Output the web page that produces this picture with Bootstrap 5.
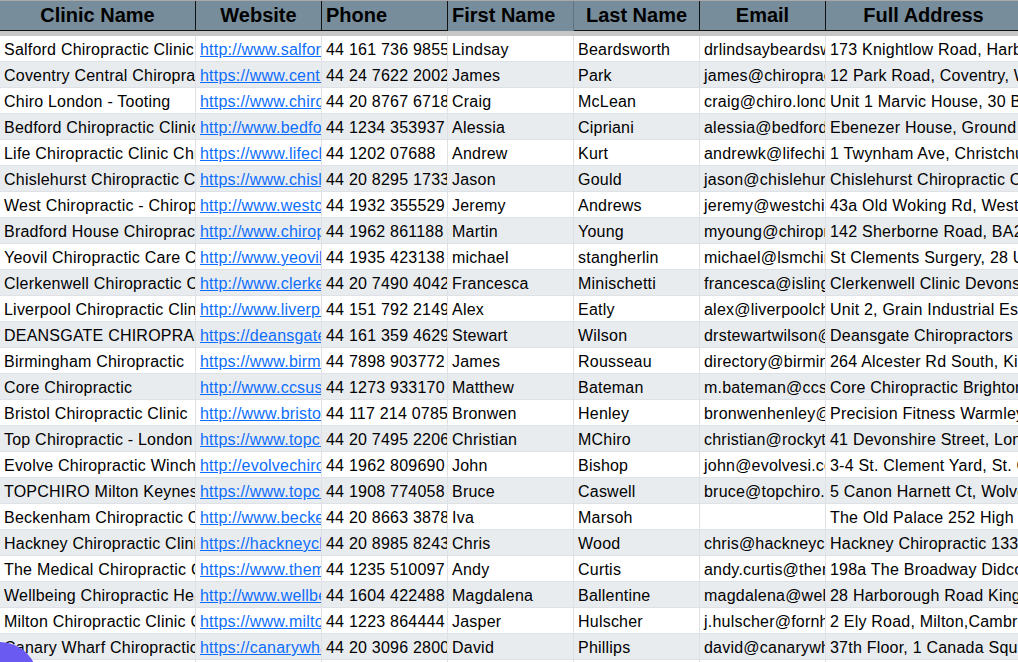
<!DOCTYPE html>
<html lang="en">
<head>
<meta charset="utf-8">
<title>Chiropractic clinics</title>
<link href="https://cdn.jsdelivr.net/npm/bootstrap@5.3.0/dist/css/bootstrap.min.css" rel="stylesheet">
<style>
html,body{height:662px;overflow:hidden;background:#fff}
body{font-family:"Liberation Sans",Arial,sans-serif;padding-top:1px;background:#fff}
.top-rule{position:absolute;top:0;left:0;width:100%;height:1px;background:#a9a9a9}
.sheet{table-layout:fixed;width:1022px;margin:0;border-collapse:separate;border-spacing:0;font-size:16px;letter-spacing:.22px;color:#000}
.sheet col.c1{width:196px}
.sheet col.cn{width:126px}
.sheet col.c7{width:196px}
.sheet thead th{background:#778d9b;color:#000;font-size:20px;letter-spacing:0;font-weight:700;height:30px;padding:0 4px;line-height:27px;text-align:center;vertical-align:middle;white-space:nowrap;overflow:hidden;border:0;border-right:1px solid #111;border-bottom:1px solid #111;border-left:0}
.sheet thead th.left-h{text-align:left}
.sheet thead th.soft{border-right-color:#5f7381;border-bottom-color:#778d9b}
.sheet thead tr.band td{height:5px;padding:0;background:#c6c6c6;border:0}
.sheet tbody td{height:26px;padding:3px 0 0 4px;line-height:22px;vertical-align:middle;white-space:nowrap;overflow:hidden;border:0;border-right:1px solid #dee2e6;border-bottom:1px solid #dee2e6;background:#fff;color:#000;box-shadow:none}
.sheet tbody tr:nth-child(even) td{background:#e9ecef}
.sheet tbody a{color:#0d6efd}
.launcher{position:fixed;left:-38px;bottom:-56px;width:76px;height:76px;border-radius:50%;background:#6a5af2}
</style>
</head>
<body>
<div class="top-rule"></div>
<table class="table sheet">
<colgroup><col class="c1"><col class="cn"><col class="cn"><col class="cn"><col class="cn"><col class="cn"><col class="c7"></colgroup>
<thead>
<tr><th>Clinic Name</th><th>Website</th><th class="left-h">Phone</th><th class="left-h soft">First Name</th><th>Last Name</th><th>Email</th><th>Full Address</th></tr>
<tr class="band"><td colspan="7"></td></tr>
</thead>
<tbody>
<tr><td>Salford Chiropractic Clinic</td><td><a href="#">http://www.salford.co.uk</a></td><td>44 161 736 9855</td><td>Lindsay</td><td>Beardsworth</td><td>drlindsaybeardsworth</td><td>173 Knightlow Road, Harborne</td></tr>
<tr><td>Coventry Central Chiropractic</td><td><a href="#">https://www.central.co.uk</a></td><td>44 24 7622 2002</td><td>James</td><td>Park</td><td>james@chiropractic</td><td>12 Park Road, Coventry, West Midlands</td></tr>
<tr><td>Chiro London - Tooting</td><td><a href="#">https://www.chiro.london</a></td><td>44 20 8767 6718</td><td>Craig</td><td>McLean</td><td>craig@chiro.london</td><td>Unit 1 Marvic House, 30 Bellevue</td></tr>
<tr><td>Bedford Chiropractic Clinic</td><td><a href="#">http://www.bedford.co.uk</a></td><td>44 1234 353937</td><td>Alessia</td><td>Cipriani</td><td>alessia@bedford.co</td><td>Ebenezer House, Ground Floor</td></tr>
<tr><td>Life Chiropractic Clinic Christchurch</td><td><a href="#">https://www.lifechiro.co</a></td><td>44 1202 07688</td><td>Andrew</td><td>Kurt</td><td>andrewk@lifechiro</td><td>1 Twynham Ave, Christchurch</td></tr>
<tr><td>Chislehurst Chiropractic Clinic</td><td><a href="#">https://www.chislehurst</a></td><td>44 20 8295 1733</td><td>Jason</td><td>Gould</td><td>jason@chislehurst.co</td><td>Chislehurst Chiropractic Clinic</td></tr>
<tr><td>West Chiropractic - Chiropractor</td><td><a href="#">http://www.westchiro.co</a></td><td>44 1932 355529</td><td>Jeremy</td><td>Andrews</td><td>jeremy@westchiro</td><td>43a Old Woking Rd, West Byfleet</td></tr>
<tr><td>Bradford House Chiropractic</td><td><a href="#">http://www.chiropractic</a></td><td>44 1962 861188</td><td>Martin</td><td>Young</td><td>myoung@chiropractic</td><td>142 Sherborne Road, BA21 4HQ</td></tr>
<tr><td>Yeovil Chiropractic Care Clinic</td><td><a href="#">http://www.yeovilchiro</a></td><td>44 1935 423138</td><td>michael</td><td>stangherlin</td><td>michael@lsmchiro</td><td>St Clements Surgery, 28 Union</td></tr>
<tr><td>Clerkenwell Chiropractic Clinic</td><td><a href="#">http://www.clerkenwell</a></td><td>44 20 7490 4042</td><td>Francesca</td><td>Minischetti</td><td>francesca@islington</td><td>Clerkenwell Clinic Devonshire</td></tr>
<tr><td>Liverpool Chiropractic Clinic</td><td><a href="#">http://www.liverpoolchiro</a></td><td>44 151 792 2149</td><td>Alex</td><td>Eatly</td><td>alex@liverpoolchiro</td><td>Unit 2, Grain Industrial Estate</td></tr>
<tr><td>DEANSGATE CHIROPRACTIC</td><td><a href="#">https://deansgatechiro</a></td><td>44 161 359 4629</td><td>Stewart</td><td>Wilson</td><td>drstewartwilson@deansgate</td><td>Deansgate Chiropractors Ltd</td></tr>
<tr><td>Birmingham Chiropractic</td><td><a href="#">https://www.birminghamchiro</a></td><td>44 7898 903772</td><td>James</td><td>Rousseau</td><td>directory@birmingham</td><td>264 Alcester Rd South, Kings Heath</td></tr>
<tr><td>Core Chiropractic</td><td><a href="#">http://www.ccsussex.co</a></td><td>44 1273 933170</td><td>Matthew</td><td>Bateman</td><td>m.bateman@ccsussex</td><td>Core Chiropractic Brighton</td></tr>
<tr><td>Bristol Chiropractic Clinic</td><td><a href="#">http://www.bristolchiro</a></td><td>44 117 214 0785</td><td>Bronwen</td><td>Henley</td><td>bronwenhenley@gmail</td><td>Precision Fitness Warmley</td></tr>
<tr><td>Top Chiropractic - London</td><td><a href="#">https://www.topchiro</a></td><td>44 20 7495 2206</td><td>Christian</td><td>MChiro</td><td>christian@rockyt.com</td><td>41 Devonshire Street, London</td></tr>
<tr><td>Evolve Chiropractic Winchester</td><td><a href="#">http://evolvechiro.co</a></td><td>44 1962 809690</td><td>John</td><td>Bishop</td><td>john@evolvesi.co.uk</td><td>3-4 St. Clement Yard, St. Clement</td></tr>
<tr><td>TOPCHIRO Milton Keynes</td><td><a href="#">https://www.topchiro</a></td><td>44 1908 774058</td><td>Bruce</td><td>Caswell</td><td>bruce@topchiro.co.uk</td><td>5 Canon Harnett Ct, Wolverton</td></tr>
<tr><td>Beckenham Chiropractic Clinic</td><td><a href="#">http://www.beckenham</a></td><td>44 20 8663 3878</td><td>Iva</td><td>Marsoh</td><td></td><td>The Old Palace 252 High Street</td></tr>
<tr><td>Hackney Chiropractic Clinic</td><td><a href="#">https://hackneychiro</a></td><td>44 20 8985 8243</td><td>Chris</td><td>Wood</td><td>chris@hackneychiro</td><td>Hackney Chiropractic 133 Lauriston</td></tr>
<tr><td>The Medical Chiropractic Clinic</td><td><a href="#">https://www.themedical</a></td><td>44 1235 510097</td><td>Andy</td><td>Curtis</td><td>andy.curtis@themedical</td><td>198a The Broadway Didcot</td></tr>
<tr><td>Wellbeing Chiropractic Health</td><td><a href="#">http://www.wellbeing</a></td><td>44 1604 422488</td><td>Magdalena</td><td>Ballentine</td><td>magdalena@wellbeing</td><td>28 Harborough Road Kingsthorpe</td></tr>
<tr><td>Milton Chiropractic Clinic Cambridge</td><td><a href="#">https://www.miltonchiro</a></td><td>44 1223 864444</td><td>Jasper</td><td>Hulscher</td><td>j.hulscher@fornham</td><td>2 Ely Road, Milton,Cambridge</td></tr>
<tr><td>Canary Wharf Chiropractic Clinic</td><td><a href="#">https://canarywharfchiro</a></td><td>44 20 3096 2800</td><td>David</td><td>Phillips</td><td>david@canarywharf</td><td>37th Floor, 1 Canada Square</td></tr>
<tr><td>&nbsp;</td><td></td><td></td><td></td><td></td><td></td><td></td></tr>
</tbody>
</table>
<div class="launcher"></div>
<script src="https://cdn.jsdelivr.net/npm/bootstrap@5.3.0/dist/js/bootstrap.bundle.min.js"></script>
</body>
</html>
